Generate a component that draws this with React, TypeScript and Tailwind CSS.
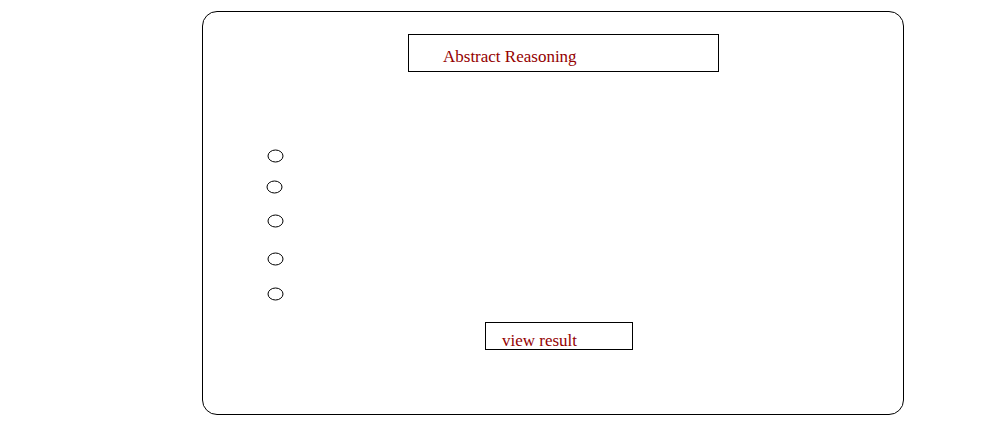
import React from 'react';

// Radio-style ellipse, like an old browser radio button
const Radio: React.FC<{ className?: string }> = ({ className }) => (
  <svg width="18" height="15" viewBox="0 0 18 15" className={className}>
    <ellipse cx="8.5" cy="7" rx="7.5" ry="6" fill="white" stroke="black" strokeWidth="1" />
  </svg>
);

const App: React.FC = () => {
  return (
    <div className="w-[984px] h-[432px] bg-white overflow-hidden pl-[202px] pt-[11px]" style={{ fontFamily: '"Liberation Serif", serif' }}>
      {/* Main card */}
      <div className="w-[702px] h-[404px] border border-black rounded-[15px] flex flex-col">
        {/* Title */}
        <div className="ml-[205px] mt-[22px] w-[311px] h-[38px] border border-black pl-[34px] pt-[10px]">
          <span className="text-[17px] leading-none text-[#940000]">Abstract Reasoning</span>
        </div>

        {/* Options */}
        <div className="ml-[64px] flex flex-col">
          <Radio className="mt-[77px]" />
          <Radio className="mt-[16px] -ml-[1px]" />
          <Radio className="mt-[19px]" />
          <Radio className="mt-[23px]" />
          <Radio className="mt-[20px]" />
        </div>

        {/* View result button */}
        <div className="ml-[282px] mt-[20px] w-[148px] h-[28px] border border-black pl-[16px] pt-[6px]">
          <span className="text-[17px] leading-none text-[#940000]">view result</span>
        </div>
      </div>
    </div>
  );
};

export default App;
